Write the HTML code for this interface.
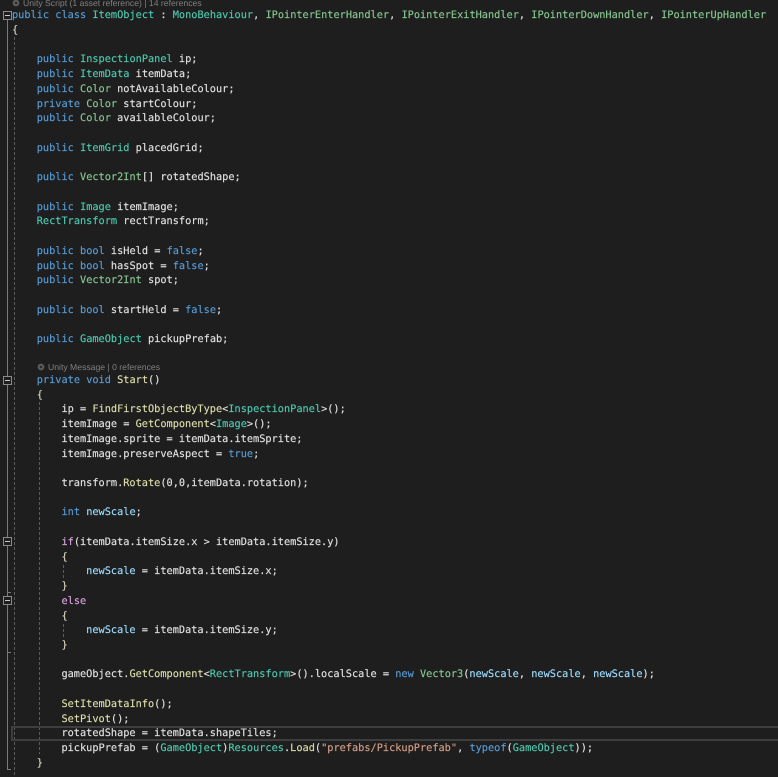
<!DOCTYPE html>
<html><head><meta charset="utf-8"><style>
html,body{margin:0;padding:0;background:#1e1e1e}
#r{position:relative;width:778px;height:777px;overflow:hidden;background:#1e1e1e;font-family:"DejaVu Sans Mono","Liberation Mono",monospace;font-size:10.27px;color:#e0e0e0;text-rendering:geometricPrecision;-webkit-text-stroke:.15px}
.l{position:absolute;left:12px;height:15px;line-height:15px;white-space:pre}
.k{color:#569cd6}.t{color:#4ec9b0}.s{color:#86c691}.m{color:#dcdcaa}.f{color:#9cdcfe}.c{color:#d8a0df}.q{color:#d69d85}.b{color:#dcd4c0}
.n{position:absolute;font-family:"Liberation Sans",sans-serif;font-size:8.65px;line-height:11px;color:#808080;white-space:pre;-webkit-text-stroke:0}
.a{position:absolute}
.box{position:absolute;left:3px;width:7px;height:7px;border:1px solid #8a8a8a;background:#1e1e1e}
.box:after{content:"";position:absolute;left:1px;top:3px;width:5px;height:1px;background:#c8c8c8}
.g{position:absolute;width:1px;background:repeating-linear-gradient(to bottom,#5c5c5c 0,#5c5c5c 3px,transparent 3px,transparent 5px)}
</style></head><body><div id="r">
<div class="a" style="left:7px;top:19px;width:1px;height:751px;background:#7a7a7a"></div>
<div class="a" style="left:7px;top:769px;width:4px;height:1px;background:#7a7a7a"></div>
<div class="a" style="left:7px;top:592px;width:4px;height:1px;background:#7a7a7a"></div>
<div class="a" style="left:7px;top:652px;width:4px;height:1px;background:#7a7a7a"></div>
<div class="g" style="left:14px;top:37px;height:740px"></div>
<div class="g" style="left:39px;top:402px;height:352px"></div>
<div class="g" style="left:63px;top:565px;height:14px"></div>
<div class="g" style="left:63px;top:624px;height:14px"></div>
<div class="a" style="left:11px;top:726px;width:767px;height:11px;border:2px solid #3e3e3e;border-right:0"></div>
<div class="box" style="top:11px"></div>
<div class="box" style="top:376px"></div>
<div class="box" style="top:537px"></div>
<div class="box" style="top:596px"></div>
<svg class="a" style="left:12px;top:-1px" width="9" height="9"><circle cx="4" cy="4" r="3.4" fill="#5a5a5a"/><circle cx="4" cy="4" r="1.2" fill="#2a2a2a"/></svg>
<div class="n" style="left:23px;top:-2px">Unity Script (1 asset reference) | 14 references</div>
<svg class="a" style="left:37px;top:363px" width="9" height="9"><circle cx="4" cy="4" r="3.4" fill="#5a5a5a"/><circle cx="4" cy="4" r="1.2" fill="#2a2a2a"/></svg>
<div class="n" style="left:48px;top:362px">Unity Message | 0 references</div>

<div class="l" style="top:8px"><span class="k">public</span> <span class="k">class</span> <span class="t">ItemObject</span> : <span class="t">MonoBehaviour</span>, <span class="s">IPointerEnterHandler</span>, <span class="s">IPointerExitHandler</span>, <span class="s">IPointerDownHandler</span>, <span class="s">IPointerUpHandler</span></div>
<div class="l" style="top:23px"><span class="b">{</span></div>
<div class="l" style="top:52px">    <span class="k">public</span> <span class="t">InspectionPanel</span> ip;</div>
<div class="l" style="top:67px">    <span class="k">public</span> <span class="t">ItemData</span> itemData;</div>
<div class="l" style="top:82px">    <span class="k">public</span> <span class="s">Color</span> notAvailableColour;</div>
<div class="l" style="top:97px">    <span class="k">private</span> <span class="s">Color</span> startColour;</div>
<div class="l" style="top:111px">    <span class="k">public</span> <span class="s">Color</span> availableColour;</div>
<div class="l" style="top:141px">    <span class="k">public</span> <span class="t">ItemGrid</span> placedGrid;</div>
<div class="l" style="top:170px">    <span class="k">public</span> <span class="s">Vector2Int</span>[] rotatedShape;</div>
<div class="l" style="top:200px">    <span class="k">public</span> <span class="t">Image</span> itemImage;</div>
<div class="l" style="top:214px">    <span class="t">RectTransform</span> rectTransform;</div>
<div class="l" style="top:244px">    <span class="k">public</span> <span class="k">bool</span> isHeld = <span class="k">false</span>;</div>
<div class="l" style="top:259px">    <span class="k">public</span> <span class="k">bool</span> hasSpot = <span class="k">false</span>;</div>
<div class="l" style="top:273px">    <span class="k">public</span> <span class="s">Vector2Int</span> spot;</div>
<div class="l" style="top:303px">    <span class="k">public</span> <span class="k">bool</span> startHeld = <span class="k">false</span>;</div>
<div class="l" style="top:332px">    <span class="k">public</span> <span class="t">GameObject</span> pickupPrefab;</div>
<div class="l" style="top:373px">    <span class="k">private</span> <span class="k">void</span> <span class="m">Start</span>()</div>
<div class="l" style="top:388px">    <span class="b">{</span></div>
<div class="l" style="top:402px">        ip = <span class="m">FindFirstObjectByType</span>&lt;<span class="t">InspectionPanel</span>&gt;();</div>
<div class="l" style="top:417px">        itemImage = <span class="m">GetComponent</span>&lt;<span class="t">Image</span>&gt;();</div>
<div class="l" style="top:432px">        itemImage.sprite = itemData.itemSprite;</div>
<div class="l" style="top:447px">        itemImage.preserveAspect = <span class="k">true</span>;</div>
<div class="l" style="top:476px">        transform.<span class="m">Rotate</span>(0,0,itemData.rotation);</div>
<div class="l" style="top:505px">        <span class="k">int</span> <span class="f">newScale</span>;</div>
<div class="l" style="top:535px">        <span class="c">if</span>(itemData.itemSize.x &gt; itemData.itemSize.y)</div>
<div class="l" style="top:550px">        <span class="b">{</span></div>
<div class="l" style="top:564px">            <span class="f">newScale</span> = itemData.itemSize.x;</div>
<div class="l" style="top:579px">        <span class="b">}</span></div>
<div class="l" style="top:594px">        <span class="c">else</span></div>
<div class="l" style="top:609px">        <span class="b">{</span></div>
<div class="l" style="top:623px">            <span class="f">newScale</span> = itemData.itemSize.y;</div>
<div class="l" style="top:638px">        <span class="b">}</span></div>
<div class="l" style="top:667px">        gameObject.<span class="m">GetComponent</span>&lt;<span class="t">RectTransform</span>&gt;().localScale = <span class="k">new</span> <span class="s">Vector3</span>(<span class="f">newScale</span>, <span class="f">newScale</span>, <span class="f">newScale</span>);</div>
<div class="l" style="top:697px">        <span class="m">SetItemDataInfo</span>();</div>
<div class="l" style="top:712px">        <span class="m">SetPivot</span>();</div>
<div class="l" style="top:726px">        rotatedShape = itemData.shapeTiles;</div>
<div class="l" style="top:741px">        pickupPrefab = (<span class="t">GameObject</span>)<span class="t">Resources</span>.<span class="m">Load</span>(<span class="q">"prefabs/PickupPrefab"</span>, <span class="k">typeof</span>(<span class="t">GameObject</span>));</div>
<div class="l" style="top:756px">    <span class="b">}</span></div>
</div></body></html>
